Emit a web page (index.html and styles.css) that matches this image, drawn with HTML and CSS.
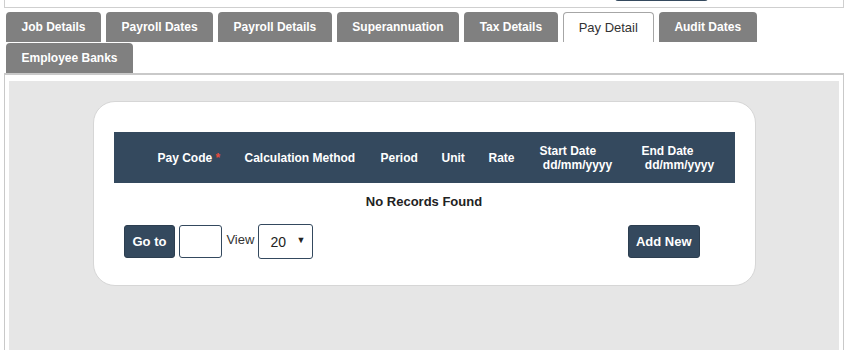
FILE: index.html
```html
<!DOCTYPE html>
<html lang="en">
<head>
      <meta charset="UTF-8">
      <meta name="viewport" content="width=device-width, initial-scale=1.0">
      <title>Employee - Pay Detail</title>
      <link rel="stylesheet" href="styles.css">
</head>
<body>
      <div class="page">
            <div class="toolbar">
                  <button class="toolbar-btn" type="button" aria-label="Save"></button>
            </div>
            <nav class="tabs">
                  <a class="tab">Job Details</a>
                  <a class="tab">Payroll Dates</a>
                  <a class="tab">Payroll Details</a>
                  <a class="tab">Superannuation</a>
                  <a class="tab">Tax Details</a>
                  <a class="tab active">Pay Detail</a>
                  <a class="tab">Audit Dates</a>
                  <a class="tab">Employee Banks</a>
            </nav>
            <section class="panel">
                  <div class="panel-body">
                        <article class="card">
                              <table class="grid">
                                    <colgroup>
                                          <col class="c-code">
                                          <col class="c-method">
                                          <col class="c-period">
                                          <col class="c-unit">
                                          <col class="c-rate">
                                          <col class="c-start">
                                          <col class="c-end">
                                    </colgroup>
                                    <thead>
                                          <tr>
                                                <th class="first">Pay Code <span class="req">*</span></th>
                                                <th>Calculation Method</th>
                                                <th>Period</th>
                                                <th>Unit</th>
                                                <th>Rate</th>
                                                <th>Start Date<br>&nbsp;dd/mm/yyyy</th>
                                                <th>End Date<br>&nbsp;dd/mm/yyyy</th>
                                          </tr>
                                    </thead>
                                    <tbody>
                                          <tr>
                                                <td colspan="7" class="empty">No Records Found</td>
                                          </tr>
                                    </tbody>
                              </table>
                              <div class="pager">
                                    <div class="pager-left">
                                          <button class="btn" type="button">Go to</button>
                                          <input class="page-input" type="text">
                                          <span class="view-label">View</span>
                                          <div class="select-wrap">
                                                <select class="page-size">
                                                      <option>20</option>
                                                      <option>50</option>
                                                      <option>100</option>
                                                </select>
                                          </div>
                                    </div>
                                    <button class="btn add" type="button">Add New</button>
                              </div>
                        </article>
                  </div>
            </section>
      </div>
</body>
</html>
```

FILE: styles.css
```css
html{
      box-sizing: border-box;
}
*, *:after, *:before{
      box-sizing: inherit;
}
body{
      margin: 0;
      font-family: "Liberation Sans", Arial, sans-serif;
      color: #222;
      overflow: hidden;
}
.page{
      margin: 0 7px 0 4px;
}
.toolbar{
      display: flex;
      justify-content: flex-end;
      margin-top: -30px;
      padding: 0 135px 6px 0;
      border: 1px solid #cfcfcf;
      border-top: none;
}
.toolbar-btn{
      width: 93px;
      height: 31px;
      border: none;
      border-radius: 3px;
      background: #34495e;
}
.tabs{
      display: flex;
      flex-wrap: wrap;
      gap: 1px 5px;
      margin-top: 4px;
      padding: 0 0 0 2px;
      max-width: 770px;
}
.tab{
      display: block;
      height: 30px;
      line-height: 30px;
      padding: 0 15.5px;
      border-radius: 4px 4px 0 0;
      background: #808080;
      color: #fff;
      font-size: 12px;
      font-weight: bold;
      cursor: pointer;
}
.tab.active{
      background: #fff;
      border: 1px solid #a6a6a6;
      border-bottom: none;
      color: #333;
      font-size: 13px;
      font-weight: normal;
      line-height: 29px;
      padding: 0 15px;
}
.panel{
      border: 1px solid #c9c9c9;
      border-top-width: 2px;
      padding: 6px 4px 0 4px;
}
.panel-body{
      background: #e6e6e6;
      padding: 20px 0 80px;
}
.card{
      width: 663px;
      margin: 0 auto;
      padding: 30px 20px 26px;
      background: #fff;
      border: 1px solid #d6d6d6;
      border-radius: 22px;
}
.grid{
      width: 100%;
      table-layout: fixed;
      border-collapse: collapse;
}
.c-code{ width: 119px; }
.c-method{ width: 136px; }
.c-period{ width: 61px; }
.c-unit{ width: 47px; }
.c-rate{ width: 51px; }
.c-start{ width: 102px; }
.c-end{ width: 105px; }
.grid th{
      height: 51px;
      padding: 0 0 0 12px;
      background: #34495e;
      color: #fff;
      font-size: 12px;
      font-weight: bold;
      text-align: left;
      line-height: 14px;
      white-space: nowrap;
}
.grid th.first{
      padding-left: 44px;
}
.req{
      color: #e74c3c;
}
.empty{
      height: 36px;
      text-align: center;
      font-size: 13px;
      font-weight: bold;
      color: #222;
}
.pager{
      display: flex;
      justify-content: space-between;
      align-items: center;
      padding: 5px 35px 0 10px;
}
.pager-left{
      display: flex;
      align-items: center;
      gap: 4px;
}
.btn{
      height: 33px;
      padding: 0 8px;
      border: 1px solid #2c3e50;
      border-radius: 3px;
      background: #34495e;
      color: #fff;
      font-family: inherit;
      font-size: 13px;
      font-weight: bold;
}
.page-input{
      width: 43px;
      height: 33px;
      border: 1px solid #34495e;
      border-radius: 3px;
}
.view-label{
      font-size: 13px;
      color: #333;
      margin: -4px 0 0 0;
}
.select-wrap{
      position: relative;
}
.select-wrap:after{
      content: "\25BC";
      position: absolute;
      right: 8px;
      top: 11px;
      font-size: 9px;
      color: #222;
      pointer-events: none;
}
.page-size{
      -webkit-appearance: none;
      appearance: none;
      width: 55px;
      height: 35px;
      padding: 0 0 0 11px;
      border: 1px solid #34495e;
      border-radius: 3px;
      background: #fff;
      font-family: inherit;
      font-size: 14px;
      color: #222;
}
.add{
      padding: 0 7px;
}
```
